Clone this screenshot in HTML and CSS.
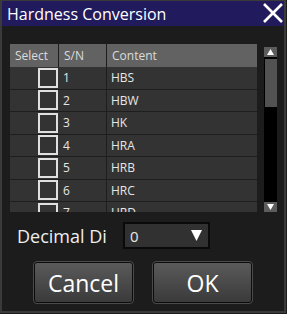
FILE: index.html
```html
<!DOCTYPE html>
<html lang="en">
<head>
    <meta charset="UTF-8">
    <title>Hardness Conversion</title>
    <link rel="stylesheet" href="styles.css">
</head>
<body>
    <div class="window">
        <div class="title-bar">
            <span class="title">Hardness Conversion</span>
            <svg class="close" width="20" height="20" viewBox="0 0 20 20">
                <path d="M1 1 L19 19 M19 1 L1 19" stroke="#fff" stroke-width="2.6" fill="none"/>
            </svg>
        </div>

        <div class="content">
            <div class="list-area">
                <div class="table">
                    <div class="head">
                        <div class="cell c-select">Select</div>
                        <div class="cell c-sn">S/N</div>
                        <div class="cell c-content">Content</div>
                    </div>
                    <div class="rows">
                        <div class="row"><div class="cell c-select"><span class="check"></span></div><div class="cell c-sn">1</div><div class="cell c-content">HBS</div></div>
                        <div class="row"><div class="cell c-select"><span class="check"></span></div><div class="cell c-sn">2</div><div class="cell c-content">HBW</div></div>
                        <div class="row"><div class="cell c-select"><span class="check"></span></div><div class="cell c-sn">3</div><div class="cell c-content">HK</div></div>
                        <div class="row"><div class="cell c-select"><span class="check"></span></div><div class="cell c-sn">4</div><div class="cell c-content">HRA</div></div>
                        <div class="row"><div class="cell c-select"><span class="check"></span></div><div class="cell c-sn">5</div><div class="cell c-content">HRB</div></div>
                        <div class="row"><div class="cell c-select"><span class="check"></span></div><div class="cell c-sn">6</div><div class="cell c-content">HRC</div></div>
                        <div class="row"><div class="cell c-select"><span class="check"></span></div><div class="cell c-sn">7</div><div class="cell c-content">HRD</div></div>
                    </div>
                </div>
                <div class="scrollbar">
                    <div class="arrow"><svg width="7" height="6" viewBox="0 0 7 6"><path d="M3.5 0 L7 6 L0 6 Z" fill="#fff"/></svg></div>
                    <div class="track"><div class="thumb"></div></div>
                    <div class="arrow"><svg width="7" height="6" viewBox="0 0 7 6"><path d="M0 0 L7 0 L3.5 6 Z" fill="#fff"/></svg></div>
                </div>
            </div>

            <div class="option">
                <span class="label">Decimal Di</span>
                <div class="select">
                    <span>0</span>
                    <svg width="11" height="11" viewBox="0 0 11 11"><path d="M0 0 L11 0 L5.5 11 Z" fill="#fff"/></svg>
                </div>
            </div>

            <div class="buttons">
                <button class="btn">Cancel</button>
                <button class="btn">OK</button>
            </div>
        </div>
    </div>
</body>
</html>
```

FILE: styles.css
```css
body {
    margin: 0;
    background: #1c1c1c;
    font-family: "Open Sans", "Noto Sans", sans-serif;
    color: #e6e6e6;
}
.window {
    width: 286px;
    height: 313px;
    box-sizing: border-box;
    border: 2px solid #3a3a3a;
    border-top-width: 1px;
    background: #1c1c1c;
    display: flex;
    flex-direction: column;
}
.title-bar {
    height: 25px;
    background: #211a5c;
    display: flex;
    align-items: center;
    justify-content: space-between;
    padding: 0 1px 0 5px;
}
.title {
    font-size: 16px;
    color: #fff;
}
.close {
    margin-top: -1px;
}
.content {
    padding: 18px 0 0 8px;
}
.list-area {
    display: flex;
    height: 168px;
}
.table {
    width: 247px;
    display: flex;
    flex-direction: column;
}
.head {
    display: flex;
    height: 23px;
    background: #626262;
    color: #dcdcdc;
}
.cell {
    font-size: 12px;
    display: flex;
    align-items: center;
    box-sizing: border-box;
    border-right: 1px solid #1e1e1e;
}
.head .cell {
    padding-left: 5px;
}
.c-select {
    width: 49px;
}
.c-sn {
    width: 48px;
}
.c-content {
    flex: 1;
    border-right: none;
}
.rows {
    flex: 1;
    overflow: hidden;
    background: #333;
}
.row {
    display: flex;
    height: 22.5px;
    box-sizing: border-box;
    border-bottom: 1px solid #1e1e1e;
}
.row .c-select {
    justify-content: flex-end;
    border-right: none;
    padding-right: 1px;
}
.row .c-sn,
.row .c-content {
    padding-left: 4px;
}
.check {
    width: 20px;
    height: 20px;
    box-sizing: border-box;
    border: 2px solid #e0e0e0;
    background: #333;
}
.scrollbar {
    margin-left: 7px;
    width: 13px;
    display: flex;
    flex-direction: column;
    padding-top: 3px;
}
.arrow {
    height: 10px;
    background: #5c5c5c;
    display: flex;
    align-items: center;
    justify-content: center;
}
.track {
    flex: 1;
    background: #000;
    padding-top: 2px;
}
.thumb {
    height: 48px;
    margin-left: 1px;
    background: #525252;
}
.option {
    display: flex;
    align-items: center;
    margin-top: 10px;
    padding-left: 7px;
}
.label {
    font-size: 18px;
    width: 106px;
    color: #eee;
}
.select {
    width: 87px;
    height: 27px;
    box-sizing: border-box;
    border: 2px solid #0a0a0a;
    background: #313131;
    display: flex;
    align-items: center;
    justify-content: space-between;
    padding: 0 6px 0 5px;
    font-size: 15px;
}
.buttons {
    display: flex;
    gap: 20px;
    margin-top: 13px;
    padding-left: 24px;
}
.btn {
    width: 99px;
    height: 41px;
    border: 1px solid #0c0c0c;
    outline: 1px solid #4a4a4a;
    border-radius: 3px;
    background: linear-gradient(#5a5a5a, #3a3a3a);
    color: #fff;
    font-family: "Open Sans", "Noto Sans", sans-serif;
    font-size: 23px;
    padding: 0;
}
```
